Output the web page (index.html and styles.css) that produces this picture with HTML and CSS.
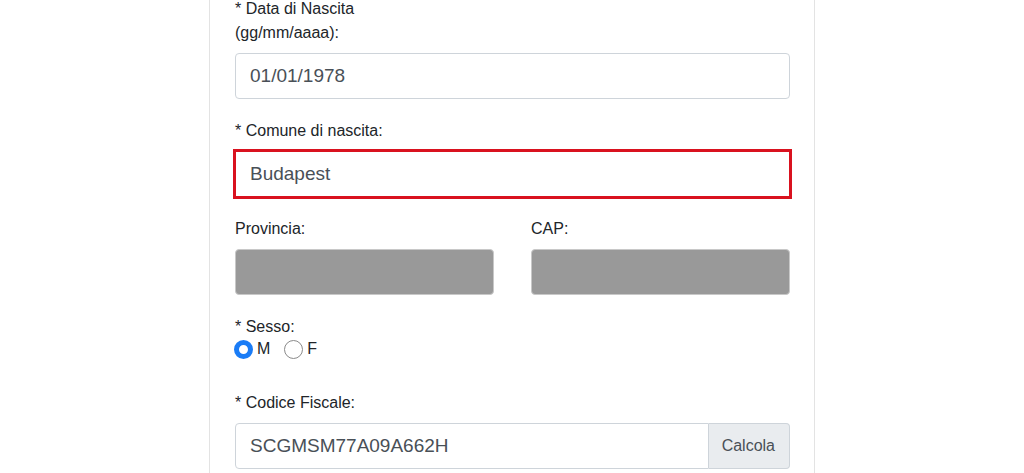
FILE: index.html
```html
<!DOCTYPE html>
<html lang="it">
<head>
<meta charset="utf-8">
<title>Modulo</title>
<link rel="stylesheet" href="styles.css">
</head>
<body>
<div class="page">
  <div class="card">
    <div class="group">
      <label class="lbl">* Data di Nascita<br>(gg/mm/aaaa):</label>
      <input class="field" type="text" value="01/01/1978">
    </div>
    <div class="group">
      <label class="lbl">* Comune di nascita:</label>
      <input class="field invalid" type="text" value="Budapest">
    </div>
    <div class="group two">
      <div>
        <label class="lbl">Provincia:</label>
        <input class="field disabled" type="text" disabled>
      </div>
      <div>
        <label class="lbl">CAP:</label>
        <input class="field disabled" type="text" disabled>
      </div>
    </div>
    <div class="group">
      <div class="lbl tight">* Sesso:</div>
      <div class="radios">
        <span class="radio on"></span><span class="rlabel">M</span>
        <span class="radio"></span><span class="rlabel">F</span>
      </div>
    </div>
    <div class="group">
      <label class="lbl">* Codice Fiscale:</label>
      <div class="igroup">
        <input class="field grow" type="text" value="SCGMSM77A09A662H">
        <span class="addon">Calcola</span>
      </div>
    </div>
  </div>
</div>
</body>
</html>
```
FILE: styles.css
```css
html, body {
  margin: 0;
  padding: 0;
  background: #fff;
  font-family: "Liberation Sans", Arial, Helvetica, sans-serif;
  color: #212529;
  overflow: hidden;
}
.page {
  width: 1024px;
  height: 473px;
  overflow: hidden;
}
.card {
  margin-left: 209px;
  width: 606px;
  height: 600px;
  margin-top: -3px;
  border-left: 1px solid #e3e3e3;
  border-right: 1px solid #e3e3e3;
  padding: 0 24px 0 25px;
  box-sizing: border-box;
}
.group {
  margin-bottom: 20px;
}
.lbl {
  display: block;
  font-size: 16px;
  line-height: 24px;
  margin-bottom: 8px;
}
.lbl.tight {
  margin-bottom: 0;
}
.field {
  display: block;
  width: 100%;
  height: 46px;
  box-sizing: border-box;
  border: 1px solid #ced4da;
  border-radius: 4px;
  padding: 0 14px;
  font-family: "Liberation Sans", Arial, Helvetica, sans-serif;
  font-size: 19px;
  color: #495057;
  background: #fff;
  margin: 0;
}
.field.invalid {
  border-color: #d9121f;
  border-radius: 0;
  box-shadow: 0 0 0 2px #d9121f;
}
.field.disabled {
  background: #999999;
  border-color: #c8c8c8;
}
.two {
  display: grid;
  grid-template-columns: 1fr 1fr;
  column-gap: 37px;
}
.radios {
  display: flex;
  align-items: center;
  height: 20px;
  margin-bottom: 32px;
}
.radio {
  width: 19px;
  height: 19px;
  box-sizing: border-box;
  border-radius: 50%;
  border: 1.5px solid #8a8a8a;
  background: #fff;
  margin-right: 4px;
  margin-left: -1px;
}
.radio.on {
  border: 5px solid #1a7cf6;
}
.rlabel {
  font-size: 16px;
  margin-right: 15px;
}
.igroup {
  display: flex;
}
.grow {
  flex: 1;
  border-top-right-radius: 0;
  border-bottom-right-radius: 0;
}
.addon {
  display: flex;
  align-items: center;
  height: 46px;
  box-sizing: border-box;
  padding: 0 14px 0 13px;
  background: #e9ecef;
  border: 1px solid #ced4da;
  border-left: 0;
  border-radius: 0 4px 4px 0;
  font-size: 16px;
  color: #495057;
}
```
